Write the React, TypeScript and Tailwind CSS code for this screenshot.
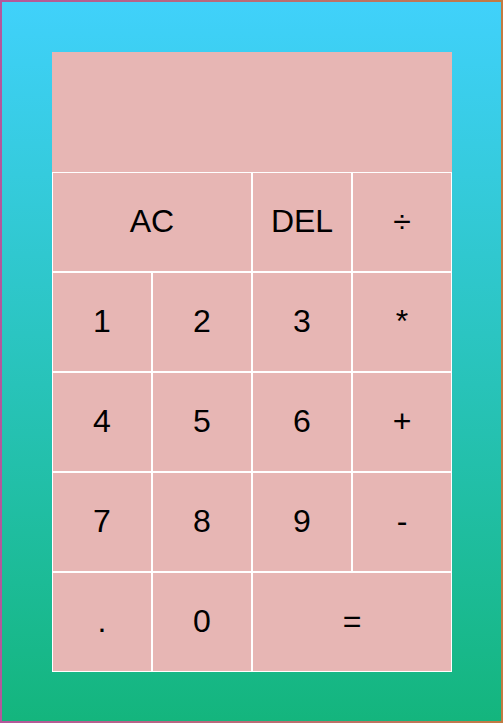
const keys: { label: string; wide?: boolean }[] = [
  { label: "AC", wide: true },
  { label: "DEL" },
  { label: "÷" },
  { label: "1" },
  { label: "2" },
  { label: "3" },
  { label: "*" },
  { label: "4" },
  { label: "5" },
  { label: "6" },
  { label: "+" },
  { label: "7" },
  { label: "8" },
  { label: "9" },
  { label: "-" },
  { label: "." },
  { label: "0" },
  { label: "=", wide: true },
];

export default function App() {
  return (
    <div className="w-[503px] h-[723px] p-[2px] bg-gradient-to-r from-[#b4579c] to-[#c27b42]">
      <div className="w-full h-full bg-gradient-to-b from-[#40d1fb] to-[#14b57d] pt-[50px] pl-[50px]">
        <div className="grid grid-cols-[repeat(4,100px)] grid-rows-[120px_repeat(5,100px)] font-['Liberation_Sans',Arial,sans-serif] text-black">
          <div className="col-span-4 bg-[#e7b6b4]"></div>
          {keys.map((k) => (
            <button
              key={k.label}
              className={`${k.wide ? "col-span-2" : ""} border border-white bg-[#e7b6b4] text-[32px] leading-none pb-[2px] flex items-center justify-center`}
            >
              {k.label}
            </button>
          ))}
        </div>
      </div>
    </div>
  );
}
